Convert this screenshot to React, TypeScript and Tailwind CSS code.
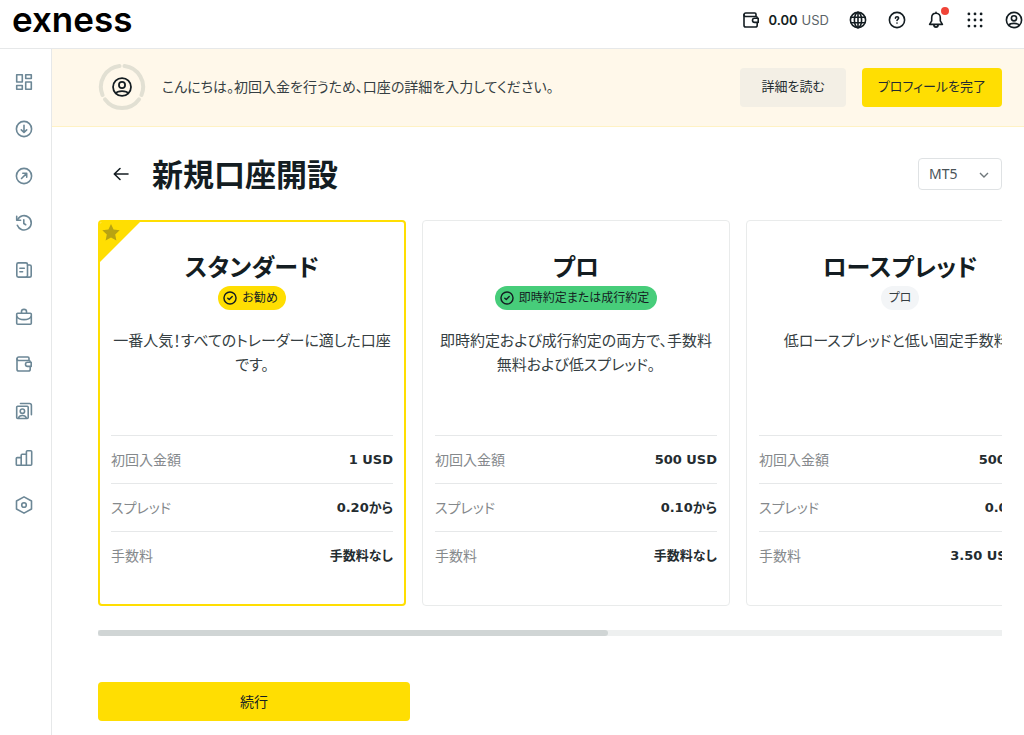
import React, { useState } from 'react';
import clsx from 'clsx';

interface IconProps {
  className?: string;
  children: React.ReactNode;
}

function Icon({ className = 'h-[18px] w-[18px]', children }: IconProps) {
  return (
    <svg
      viewBox="0 0 18 18"
      className={clsx('shrink-0', className)}
      fill="none"
      stroke="currentColor"
      strokeWidth="1.6"
      strokeLinecap="round"
      strokeLinejoin="round"
      aria-hidden="true"
    >
      {children}
    </svg>
  );
}

const walletPaths = (
  <>
    <path d="M14 5.500V3.200c0-.7-.5-1.200-1.200-1.200H3.700C2.700 2 2 2.700 2 3.700s.7 1.800 1.700 1.800H14c.7 0 1.200.5 1.200 1.300" />
    <path d="M2 3.700v10.500C2 15.300 2.800 16 3.800 16h9.600c1 0 1.800-.7 1.800-1.800v-2.500" />
    <path d="M12.600 7.200H16.200v4.200h-3.600a2.100 2.100 0 0 1 0-4.200Z" />
  </>
);

const userPaths = (
  <>
    <circle cx="9" cy="9" r="7.6" />
    <circle cx="9" cy="7.3" r="2.6" />
    <path d="M3.800 14.300c.8-1.500 2.200-1.900 5.200-1.900s4.400.4 5.200 1.900" />
  </>
);

const navItems = [
  {
    label: 'dashboard',
    icon: (
      <>
        <rect x="1.7" y="1.7" width="5.6" height="7.3" />
        <rect x="10.7" y="1.7" width="5.6" height="3.8" />
        <rect x="1.7" y="12.5" width="5.6" height="3.8" />
        <rect x="10.7" y="9" width="5.6" height="7.3" />
      </>
    ),
  },
  {
    label: 'deposit',
    icon: (
      <>
        <circle cx="9" cy="9" r="7.6" />
        <path d="M9 5.300v7M6.300 9.900 9 12.500l2.700-2.600" />
      </>
    ),
  },
  {
    label: 'withdrawal',
    icon: (
      <>
        <circle cx="9" cy="9" r="7.6" />
        <path d="m6.500 11.500 5-5M7.800 6.300h3.900v3.900" />
      </>
    ),
  },
  {
    label: 'history',
    icon: (
      <>
        <path d="M2.300 11.300A7.200 7.200 0 1 0 2.600 5.600" />
        <path d="M1.700 2.400v3.900h3.900M8.800 5.700v3.800l1.900 1.200" />
      </>
    ),
  },
  {
    label: 'news',
    icon: (
      <>
        <rect x="1.8" y="1.9" width="10.7" height="14.2" rx="1.6" />
        <path d="M12.500 4h2.200c.9 0 1.500.6 1.500 1.500v8.900c0 1-.7 1.700-1.800 1.700h-3M4.900 7.300h4.400M4.900 10.700h2.700" />
      </>
    ),
  },
  {
    label: 'portfolio',
    icon: (
      <>
        <rect x="1.7" y="5.3" width="14.6" height="10.9" rx="1" />
        <path d="M6.500 5.100V3.600c0-1.400 1-2.200 2.500-2.200s2.500.8 2.500 2.200v1.500M1.900 8.600c1.200 2.100 3.800 3 7.100 3s5.900-.9 7.100-3" />
      </>
    ),
  },
  { label: 'wallet', icon: walletPaths },
  {
    label: 'social',
    icon: (
      <>
        <rect x="1.7" y="4.2" width="11.5" height="12.3" rx="1" />
        <path d="M5.500 1.500h9c1.200 0 1.900.8 1.900 1.900v9.300M3.500 16c.5-1.800 1.900-2.500 3.900-2.500s3.400.7 3.900 2.500" />
        <circle cx="7.4" cy="9.2" r="2.2" />
      </>
    ),
  },
  {
    label: 'performance',
    icon: (
      <path d="M1.300 9.500c0-.6.3-.9.9-.9h4v7.700h-4c-.6 0-.9-.3-.9-.9ZM6.200 6.200c0-.6.3-.9.9-.9h4.300v11H6.200ZM11.400 2.700c0-.7.3-1 1-1h3.300c.6 0 1 .3 1 1v12.600c0 .6-.4 1-1 1h-4.300Z" />
    ),
  },
  {
    label: 'settings',
    icon: (
      <>
        <path d="M9 .9 16.500 5v8L9 17.100 1.500 13V5Z" />
        <circle cx="9" cy="9" r="2.3" />
      </>
    ),
  },
];

interface Account {
  id: string;
  name: string;
  badge: string;
  badgeClass: string;
  checked: boolean;
  description: string;
  deposit: string;
  spread: string;
  commission: string;
}

const accounts: Account[] = [
  {
    id: 'standard',
    name: 'スタンダード',
    badge: 'お勧め',
    badgeClass: 'bg-[#ffde02] pl-1',
    checked: true,
    description: '一番人気！すべてのトレーダーに適した口座です。',
    deposit: '1 USD',
    spread: '0.20から',
    commission: '手数料なし',
  },
  {
    id: 'pro',
    name: 'プロ',
    badge: '即時約定または成行約定',
    badgeClass: 'bg-[#47cd7a] pl-1',
    checked: true,
    description: '即時約定および成行約定の両方で、手数料無料および低スプレッド。',
    deposit: '500 USD',
    spread: '0.10から',
    commission: '手数料なし',
  },
  {
    id: 'raw',
    name: 'ロースプレッド',
    badge: 'プロ',
    badgeClass: 'bg-[#f3f5f7] pl-2 text-[#353e42]',
    checked: false,
    description: '低ロースプレッドと低い固定手数料。',
    deposit: '500 USD',
    spread: '0.00から',
    commission: '3.50 USDまで',
  },
];

interface AccountCardProps {
  account: Account;
  selected: boolean;
  onSelect: () => void;
}

function AccountCard({ account, selected, onSelect }: AccountCardProps) {
  const rows = [
    ['初回入金額', account.deposit],
    ['スプレッド', account.spread],
    ['手数料', account.commission],
  ];

  return (
    <article
      onClick={onSelect}
      className={clsx(
        'relative w-[308px] shrink-0 cursor-pointer overflow-hidden rounded',
        selected ? 'border-2 border-[#ffde02] px-[11px] pt-6 pb-[25px]' : 'border border-[#e9ebeb] px-3 pt-[25px] pb-[26px]'
      )}
    >
      {selected && (
        <svg viewBox="0 0 42 42" className="absolute top-0 left-0 h-[42px] w-[42px]" aria-hidden="true">
          <path d="M0 0h40L0 40Z" fill="#ffde02" />
          <path
            d="m11 2 2.600 5.600 6.100.7-4.500 4.200 1.200 6.100-5.400-3-5.400 3 1.200-6.100L2.300 8.300l6.100-.7Z"
            fill="#b8a312"
          />
        </svg>
      )}
      <div className="flex flex-col items-center text-center">
        <h2 className="pt-[2px] text-2xl leading-[38px] font-bold">{account.name}</h2>
        <span className={clsx('flex h-6 items-center gap-1 rounded-full pr-2 text-xs', account.badgeClass)}>
          {account.checked && (
            <Icon className="h-4 w-4">
              <circle cx="9" cy="9" r="6.8" />
              <path d="m6.500 9.200 1.700 1.600 3.300-3.400" />
            </Icon>
          )}
          {account.badge}
        </span>
        <p className="mt-[18px] h-[107px] text-[15px] leading-6 text-[#353e42]">{account.description}</p>
      </div>
      <dl>
        {rows.map(([label, value]) => (
          <div key={label} className="flex h-12 items-center justify-between border-t border-[#e6e8e9]">
            <dt className="text-sm text-[#85898c]">{label}</dt>
            <dd className="font-['DejaVu_Sans','Noto_Sans_CJK_JP',sans-serif] text-[13px] font-bold whitespace-nowrap text-[#242c30]">
              {value}
            </dd>
          </div>
        ))}
      </dl>
    </article>
  );
}

export default function App() {
  const [selectedId, setSelectedId] = useState('standard');
  const [platform, setPlatform] = useState('MT5');

  return (
    <div className="flex min-h-screen flex-col bg-white font-['Noto_Sans','Noto_Sans_CJK_JP',sans-serif] text-[#141d22] [font-feature-settings:'palt']">
      <header className="flex h-[49px] items-center justify-between border-b border-[#e6e8e9] pl-3 font-['Inter',sans-serif]">
        <a href="#" className="pb-[10px] text-[35px] leading-9 font-semibold text-black">
          exness
        </a>
        <div className="flex items-center gap-5 pr-px pb-2">
          <button className="flex items-center gap-2">
            <Icon>{walletPaths}</Icon>
            <span className="flex gap-1 text-[13px] leading-5">
              <b className="font-semibold">0.00</b>
              <span className="text-[#5b6468]">USD</span>
            </span>
          </button>
          <div className="flex items-center gap-[21px]">
            <button aria-label="language">
              <Icon>
                <circle cx="9" cy="9" r="7.6" />
                <ellipse cx="9" cy="9" rx="3.6" ry="7.6" />
                <path d="M2.200 6.200h13.600M2.200 11.800h13.600M9 1.400v15.200" />
              </Icon>
            </button>
            <button aria-label="help">
              <Icon>
                <circle cx="9" cy="9" r="7.6" />
                <path d="M7.400 7.200c.1-.9.7-1.400 1.600-1.400s1.600.5 1.600 1.300c0 1.200-1.600 1.200-1.600 2.400M9 12v.1" />
              </Icon>
            </button>
            <button aria-label="notifications" className="relative">
              <Icon>
                <path d="M9 1.300v1M9 2.300c-2.800 0-4.300 2-4.300 4.500v3.100L2.600 13.400h12.800l-2.100-3.500V6.800c0-2.500-1.500-4.500-4.300-4.500ZM6.800 13.600c.1 1.600.9 2.500 2.200 2.500s2.100-.9 2.200-2.500" />
              </Icon>
              <span className="absolute -top-1 -right-1 h-2 w-2 rounded-full bg-[#f04438]" />
            </button>
            <button aria-label="apps">
              <Icon>
                <g fill="currentColor" stroke="none">
                  {[2.9, 9, 15.1].map((y) => [2.9, 9, 15.1].map((x) => <circle key={`${x}-${y}`} cx={x} cy={y} r="1.4" />))}
                </g>
              </Icon>
            </button>
            <button aria-label="profile">
              <Icon>{userPaths}</Icon>
            </button>
          </div>
        </div>
      </header>

      <div className="flex flex-1">
        <nav className="w-[52px] shrink-0 border-r border-[#e6e8e9] pt-[9px] text-[#6c8796]">
          {navItems.map((item) => (
            <a key={item.label} href="#" aria-label={item.label} className="flex h-[47px] items-center pl-[15px]">
              <Icon>{item.icon}</Icon>
            </a>
          ))}
        </nav>

        <main className="min-w-0 flex-1">
          <section className="flex h-[78px] items-center border-b border-[#fff2c4] bg-[#fff8ea] pr-[22px] pb-px pl-[46px]">
            <svg viewBox="0 0 48 48" className="h-12 w-12 shrink-0" fill="none" aria-hidden="true">
              <g stroke="#e2e0d3" strokeWidth="4" strokeLinecap="round">
                <path d="M26.500 3.100A21 21 0 0 1 43.500 32" />
                <path d="M41 36.300A21 21 0 0 1 7 36.300" />
                <path d="M4.500 32A21 21 0 0 1 21.500 3.100" />
              </g>
              <g transform="translate(13.4 13.4) scale(1.18)" stroke="#141d22" strokeWidth="1.5" strokeLinecap="round">
                {userPaths}
              </g>
            </svg>
            <p className="ml-4 flex-1 text-sm text-[#353e42]">
              こんにちは。初回入金を行うため、口座の詳細を入力してください。
            </p>
            <button className="h-[39px] rounded bg-[#f3efe5] px-[21px] text-[13px] text-[#242c30]">詳細を読む</button>
            <button className="ml-4 h-[39px] rounded bg-[#ffde02] px-4 text-[13px] text-[#242c30]">プロフィールを完了</button>
          </section>

          <div className="pr-[22px] pl-[46px]">
            <div className="flex h-[93px] items-center">
              <button aria-label="back" className="ml-[14px]">
                <Icon>
                  <path d="M16 9H2.500M8 3.500 2.300 9 8 14.500" />
                </Icon>
              </button>
              <h1 className="ml-[22px] flex-1 text-[31px] leading-10 font-bold">新規口座開設</h1>
              <div className="relative">
                <select
                  aria-label="platform"
                  value={platform}
                  onChange={(e) => setPlatform(e.target.value)}
                  className="h-8 w-[84px] appearance-none rounded border border-[#dfe2e4] bg-white pl-[10px] text-sm text-[#4a5357]"
                >
                  <option>MT5</option>
                </select>
                <svg
                  viewBox="0 0 10 10"
                  className="pointer-events-none absolute top-3 right-[13px] h-[10px] w-[10px]"
                  fill="none"
                  stroke="#6f777b"
                  strokeWidth="1.4"
                  aria-hidden="true"
                >
                  <path d="m1 3 4 4 4-4" />
                </svg>
              </div>
            </div>

            <div className="flex gap-4 overflow-hidden">
              {accounts.map((account) => (
                <AccountCard
                  key={account.id}
                  account={account}
                  selected={account.id === selectedId}
                  onSelect={() => setSelectedId(account.id)}
                />
              ))}
            </div>

            <div className="mt-6 h-[6px] bg-[#eef0f0]">
              <div className="h-full w-[56.4%] rounded-full bg-[#d0d5d5]" />
            </div>

            <button className="mt-[46px] h-[39px] w-[312px] rounded bg-[#ffde02] text-sm">続行</button>
          </div>
        </main>
      </div>
    </div>
  );
}
